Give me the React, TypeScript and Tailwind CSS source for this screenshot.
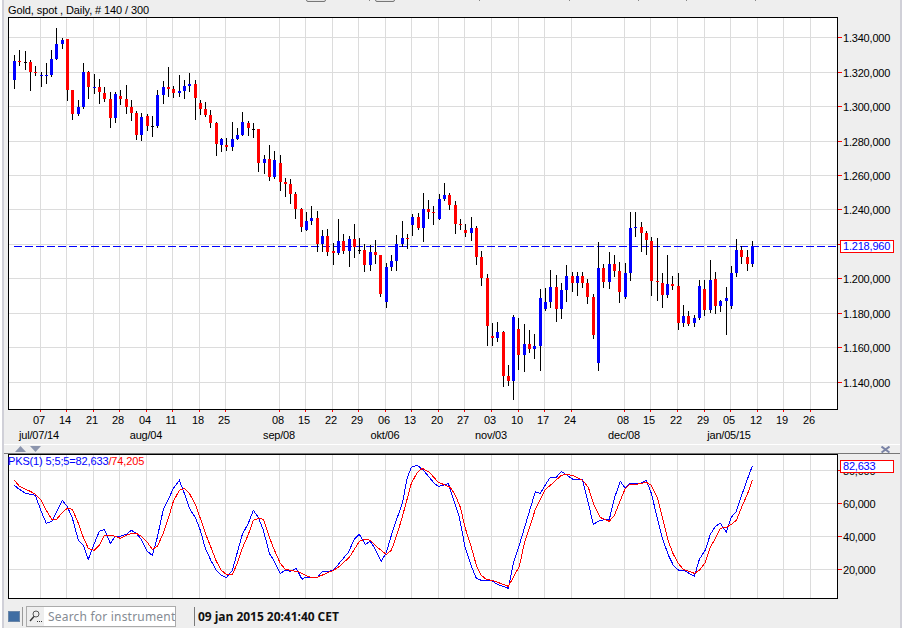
import React from 'react';

type Candle = [number, number, number, number, string];

// wick top, body top, body bottom, wick bottom in page pixels, b = up, r = down, k = doji
const CANDLES: Candle[] = [
  [55, 61, 80, 89, 'b'], [50, 61, 62, 66, 'r'], [51, 62, 63, 70, 'k'], [60, 62, 72, 91, 'r'], [66, 72, 73, 76, 'r'],
  [72, 75, 76, 87, 'b'], [63, 75, 76, 84, 'b'], [50, 59, 75, 77, 'b'], [28, 44, 59, 60, 'b'], [38, 40, 44, 49, 'b'],
  [39, 39, 90, 101, 'r'], [90, 90, 114, 120, 'r'], [100, 107, 114, 116, 'b'], [63, 72, 107, 109, 'b'], [71, 72, 87, 99, 'r'],
  [74, 87, 88, 94, 'b'], [79, 87, 92, 104, 'r'], [87, 93, 99, 102, 'r'], [92, 99, 118, 128, 'r'], [92, 94, 118, 123, 'b'],
  [90, 96, 99, 105, 'r'], [85, 99, 107, 114, 'r'], [100, 107, 113, 121, 'r'], [111, 113, 135, 140, 'r'], [113, 117, 135, 141, 'b'],
  [114, 116, 126, 131, 'r'], [116, 126, 127, 137, 'k'], [90, 95, 126, 128, 'b'], [81, 87, 95, 104, 'b'], [67, 87, 89, 97, 'r'],
  [86, 89, 93, 98, 'r'], [75, 91, 93, 97, 'b'], [80, 86, 91, 99, 'b'], [73, 84, 86, 92, 'b'], [80, 84, 98, 120, 'r'],
  [100, 103, 109, 115, 'r'], [102, 109, 115, 117, 'r'], [110, 115, 123, 128, 'r'], [122, 123, 144, 156, 'r'], [138, 139, 145, 152, 'b'],
  [138, 145, 147, 151, 'r'], [122, 139, 147, 151, 'b'], [128, 135, 139, 140, 'b'], [112, 122, 135, 136, 'b'], [121, 123, 128, 136, 'r'],
  [123, 129, 130, 138, 'k'], [129, 129, 163, 172, 'r'], [155, 159, 163, 174, 'b'], [145, 159, 177, 181, 'r'], [151, 160, 177, 179, 'b'],
  [155, 163, 182, 191, 'r'], [178, 182, 184, 197, 'r'], [179, 184, 194, 204, 'r'], [192, 194, 209, 219, 'r'], [208, 209, 227, 232, 'r'],
  [212, 221, 230, 231, 'b'], [206, 218, 221, 225, 'b'], [211, 218, 244, 252, 'r'], [230, 236, 244, 252, 'b'], [229, 236, 252, 256, 'r'],
  [243, 251, 253, 265, 'r'], [219, 241, 253, 255, 'b'], [234, 241, 251, 254, 'r'], [236, 239, 251, 267, 'b'], [224, 239, 247, 258, 'r'],
  [238, 250, 251, 254, 'k'], [244, 250, 265, 272, 'r'], [245, 252, 265, 271, 'b'], [240, 252, 255, 264, 'r'], [255, 255, 294, 297, 'r'],
  [263, 267, 302, 308, 'b'], [255, 261, 267, 271, 'b'], [235, 244, 261, 271, 'b'], [221, 238, 244, 247, 'b'], [234, 238, 239, 249, 'r'],
  [214, 217, 225, 236, 'b'], [213, 217, 228, 230, 'r'], [193, 209, 228, 242, 'b'], [200, 209, 212, 219, 'r'], [206, 212, 213, 225, 'r'],
  [194, 199, 219, 220, 'b'], [183, 195, 199, 201, 'b'], [193, 195, 205, 210, 'r'], [201, 205, 224, 234, 'r'], [219, 224, 225, 230, 'r'],
  [224, 230, 233, 237, 'r'], [217, 228, 233, 241, 'b'], [226, 228, 257, 265, 'r'], [251, 257, 278, 286, 'r'], [274, 278, 326, 346, 'r'],
  [323, 336, 338, 346, 'r'], [322, 332, 338, 342, 'b'], [331, 332, 376, 387, 'r'], [365, 376, 381, 386, 'r'], [315, 317, 381, 400, 'b'],
  [318, 329, 355, 370, 'r'], [324, 344, 355, 372, 'b'], [330, 344, 349, 353, 'r'], [334, 346, 349, 359, 'b'], [289, 298, 346, 371, 'b'],
  [288, 302, 309, 311, 'b'], [270, 287, 302, 308, 'b'], [275, 287, 309, 322, 'r'], [283, 290, 309, 319, 'b'], [265, 276, 290, 302, 'b'],
  [272, 276, 283, 292, 'r'], [272, 276, 283, 296, 'b'], [272, 276, 283, 288, 'r'], [279, 283, 297, 304, 'r'], [294, 297, 335, 339, 'r'],
  [242, 268, 363, 371, 'b'], [264, 268, 282, 288, 'r'], [252, 264, 282, 289, 'b'], [255, 264, 271, 277, 'r'], [262, 271, 292, 303, 'r'],
  [263, 273, 297, 299, 'b'], [212, 228, 273, 281, 'b'], [212, 227, 228, 237, 'b'], [222, 227, 233, 252, 'r'], [231, 233, 240, 255, 'r'],
  [237, 241, 281, 296, 'r'], [238, 281, 282, 301, 'r'], [273, 283, 295, 308, 'r'], [255, 284, 295, 298, 'b'], [276, 284, 286, 290, 'r'],
  [273, 286, 323, 330, 'r'], [305, 316, 323, 327, 'b'], [311, 316, 324, 326, 'r'], [315, 318, 323, 327, 'b'], [280, 286, 318, 320, 'b'],
  [280, 289, 310, 316, 'r'], [260, 280, 310, 313, 'b'], [272, 279, 306, 314, 'r'], [300, 301, 306, 312, 'b'], [287, 298, 301, 335, 'b'],
  [266, 273, 306, 309, 'b'], [239, 250, 273, 277, 'b'], [246, 250, 257, 264, 'r'], [250, 257, 264, 271, 'r'], [241, 246, 264, 267, 'b'],
];

const GRID_X = [
  40, 66, 93, 119, 146, 172, 199, 225, 279, 305, 332, 358, 385, 411, 438, 464, 491, 518, 544, 571, 624, 650, 677, 704, 730, 757, 783, 810,
];
const DAYS = [
  '07', '14', '21', '28', '04', '11', '18', '25', '08', '15', '22', '29', '06', '13', '20', '27', '03', '10', '17', '24', '08', '15', '22', '29', '05', '12', '19', '26',
];
const MONTHS: [string, number][] = [
  ['jul/07/14', 39], ['aug/04', 146], ['sep/08', 279], ['okt/06', 385], ['nov/03', 491], ['dec/08', 624], ['jan/05/15', 729],
];
const PRICES: [string, number][] = [
  ['1.340,000', 37], ['1.320,000', 72], ['1.300,000', 106], ['1.280,000', 141], ['1.260,000', 175], ['1.240,000', 209],
  ['1.220,000', 244], ['1.200,000', 278], ['1.180,000', 313], ['1.160,000', 347], ['1.140,000', 382],
];
const LEVELS: [string, number][] = [['80,000', 470], ['60,000', 503], ['40,000', 536], ['20,000', 569]];

// the oscillator was read off in three stretches, at 3x
const toPoints = (ox: number, oy: number, raw: number[]) => {
  const out: string[] = [];
  for (let i = 0; i < raw.length; i += 2) out.push(`${ox + raw[i] / 3},${oy + raw[i + 1] / 3}`);
  return out;
};

const BLUE_LINE = [
  ...toPoints(0, 400, [43,256,58,268,76,280,91,283,106,286,124,335,139,370,155,364,170,335,187,301,202,320,217,354,235,421,250,436,265,478,283,430,298,394,313,388,331,430,346,409,361,409,379,403,394,391,409,400,424,418,442,454,457,466,472,412,490,328,505,298,520,265,538,241,553,280,568,325,586,352,601,391,616,445,634,484,649,511,664,526,679,533,697,511,712,457,727,403,745,370,760,331,775,352,790,390,808,460,823,484,841,520,856,511,871,514,889,505]),
  ...toPoints(300, 440, [6,418,16,412,52,413,67,394,85,394,100,391,115,373,130,355,145,337,163,298,178,283,196,313,211,304,226,328,244,364,259,337,274,286,289,241,307,190,322,112,334,82,352,76,370,91,388,112,403,130,415,139,430,136,445,130,460,178,478,232,496,325,514,379,529,415,544,421,574,421,592,433,625,445,640,370,655,325,673,265,691,205,706,155,721,160,739,130,751,112,769,112,784,94,802,106,820,119,847,118,865,190,880,253,900,241]),
  ...toPoints(605, 440, [13,238,28,175,46,124,61,145,76,130,106,130,124,121,139,160,157,235,172,295,190,345,205,376,220,390,235,390,268,409,283,358,301,330,316,283,331,259,346,250,364,277,379,232,394,214,412,160,427,118,442,78]),
].join(' ');

const RED_LINE = [
  ...toPoints(0, 400, [43,240,58,259,76,268,91,274,106,283,124,301,139,331,155,358,170,358,187,337,202,325,217,328,235,370,250,412,265,445,283,451,298,436,313,406,331,406,346,409,361,415,379,406,394,400,409,400,424,409,442,427,457,448,472,439,490,400,505,355,520,304,538,271,553,265,568,280,586,313,601,355,616,400,634,445,649,484,664,511,679,523,697,523,712,490,727,445,745,403,760,361,775,355,790,358,808,412,823,450,841,490,856,508,871,511,889,514]),
  ...toPoints(300, 440, [0,397,16,406,34,412,52,412,85,397,100,391,115,382,148,352,178,304,196,298,211,301,232,322,259,343,274,331,289,289,304,241,322,175,334,130,352,97,367,85,388,97,415,127,430,133,451,142,466,166,481,202,496,265,514,322,529,376,544,406,559,418,577,421,625,439,658,379,673,310,691,256,706,208,736,148,751,136,784,106,799,103,817,106,847,120,865,142,882,196,900,232]),
  ...toPoints(605, 440, [13,244,28,226,46,181,61,145,76,132,100,132,124,127,139,136,157,172,172,232,190,304,205,343,220,370,235,388,268,400,283,391,301,367,316,322,331,295,346,265,364,262,379,253,394,241,412,196,427,163,442,121]),
].join(' ');

const candleColor = { b: '#0000ff', r: '#ff0000', k: '#000000' } as Record<string, string>;

function Grid({ rows, top, bottom }: { rows: number[]; top: number; bottom: number }) {
  return (
    <g fill="#dcdcdc">
      {GRID_X.map((x) => (
        <rect key={x} x={x} y={top} width={1} height={bottom - top} />
      ))}
      {rows.map((y) => (
        <rect key={y} x={9} y={y} width={828} height={1} />
      ))}
    </g>
  );
}

function YAxis({ ticks, top, height }: { ticks: [string, number][]; top: number; height: number }) {
  return (
    <svg
      width={62}
      height={height}
      viewBox={`838 ${top} 62 ${height}`}
      className="shrink-0 font-['Liberation_Sans',Arial,sans-serif] text-[11px] tracking-[-0.2px]"
    >
      {ticks.map(([label, y]) => (
        <g key={label}>
          <rect x={838} y={y} width={4} height={1} fill="#ff0000" />
          <text x={843} y={y + 4.5} fill="#000000">
            {label}
          </text>
        </g>
      ))}
    </svg>
  );
}

function PricePane() {
  return (
    <div className="flex h-[393px]">
      <div className="ml-[4px] h-[393px] w-[830px] shrink-0 border border-black bg-white">
        <svg width={828} height={391} viewBox="9 18 828 391" shapeRendering="crispEdges">
          <Grid rows={PRICES.map((p) => p[1])} top={18} bottom={409} />
          <line x1={14} y1={246} x2={837} y2={246} stroke="#0000ff" strokeDasharray="8 3" />
          {CANDLES.map(([high, open, close, low, kind], i) => {
            const x = Math.floor(14.5 + 5.31 * i);
            const color = candleColor[kind];
            return (
              <g key={i}>
                <rect x={x} y={high} width={1} height={low - high} fill="#000000" />
                <rect x={x - 1} y={open} width={3} height={Math.max(close - open, 1)} fill={color} />
              </g>
            );
          })}
        </svg>
      </div>
      <div className="relative">
        <YAxis ticks={PRICES} top={17} height={393} />
        <div className="absolute left-[2px] top-[223px] flex h-[13px] w-[54px] items-center border border-[#ff0000] bg-white pl-[2px] font-['Liberation_Sans',Arial,sans-serif] text-[11px] tracking-[-0.2px] text-[#0000ff]">
          1.218,960
        </div>
      </div>
    </div>
  );
}

function TimeAxis() {
  return (
    <svg
      width={896}
      height={34}
      viewBox="4 410 896 34"
      className="block font-['Liberation_Sans',Arial,sans-serif] text-[11px] tracking-[-0.2px]"
    >
      {GRID_X.map((x, i) => (
        <g key={x}>
          <rect x={x} y={410} width={1} height={2} fill="#ff0000" />
          <text x={x - 1} y={424} textAnchor="middle" fill="#000000">
            {DAYS[i]}
          </text>
        </g>
      ))}
      {MONTHS.map(([label, x]) => (
        <text key={label} x={x} y={439} textAnchor="middle" fill="#000000">
          {label}
        </text>
      ))}
    </svg>
  );
}

function PaneControls() {
  return (
    <div className="flex h-[8px] items-start justify-between pl-[11px] pr-[10px]">
      <svg width={26} height={7} viewBox="0 0 26 7" className="mt-[1px]">
        <polygon points="0,6 5.5,0 11,6" fill="#8c95ad" />
        <polygon points="15,0 26,0 20.5,6" fill="#8c95ad" />
      </svg>
      <svg width={9} height={7} viewBox="0 0 9 7" className="mt-[1px]">
        <path d="M0.5 0.5 L8.5 6.5 M8.5 0.5 L0.5 6.5" stroke="#7b84a6" strokeWidth={2} fill="none" />
      </svg>
    </div>
  );
}

function OscillatorPane() {
  return (
    <div className="flex h-[145px]">
      <div className="relative ml-[4px] h-[145px] w-[830px] shrink-0 border border-black bg-white">
        <svg width={828} height={143} viewBox="9 455 828 143" shapeRendering="crispEdges">
          <Grid rows={LEVELS.map((l) => l[1])} top={455} bottom={598} />
          <polyline points={BLUE_LINE} fill="none" stroke="#0000ff" />
          <polyline points={RED_LINE} fill="none" stroke="#ff0000" />
        </svg>
        <div className="absolute left-[-1px] top-0 font-['Liberation_Sans',Arial,sans-serif] text-[11px] leading-[13px] tracking-[-0.14px] text-[#0000ff]">
          PKS(1) 5;5;5=82,633<span className="text-[#ff0000]">/74,205</span>
        </div>
      </div>
      <div className="relative">
        <YAxis ticks={LEVELS} top={454} height={145} />
        <div className="absolute left-[2px] top-[6px] flex h-[13px] w-[54px] items-center border border-[#ff0000] bg-white pl-[2px] font-['Liberation_Sans',Arial,sans-serif] text-[11px] tracking-[-0.2px] text-[#0000ff]">
          82,633
        </div>
      </div>
    </div>
  );
}

function StatusBar() {
  return (
    <div className="mt-[6px] flex h-[23px] items-center pl-[4px]">
      <div className="h-[11px] w-[12px] border border-[#6a86a8] bg-[#3f6da3]" />
      <div className="ml-[2px] h-[19px] w-px bg-[#9a9a9a]" />
      <div className="ml-[3px] flex h-[21px] w-[150px] items-stretch border border-[#ababab]">
        <div className="flex w-[17px] items-center justify-center bg-[#eeeeee]">
          <svg width={14} height={13} viewBox="0 0 14 13" fill="none">
            <circle cx={7} cy={4} r={3} stroke="#555555" />
            <line x1={5} y1={6.5} x2={1} y2={11} stroke="#333333" strokeWidth={1.4} />
            <rect x={8} y={11} width={1} height={1} fill="#333333" />
            <rect x={10} y={11} width={1} height={1} fill="#333333" />
            <rect x={12} y={11} width={1} height={1} fill="#333333" />
          </svg>
        </div>
        <div className="flex flex-1 items-center overflow-hidden whitespace-nowrap bg-white pl-[4px] pt-[1px] font-['Noto_Sans',sans-serif] text-[12px] tracking-[0.2px] text-[#858b93]">
          Search for instrument
        </div>
      </div>
      <div className="ml-[18px] h-[19px] w-px bg-[#7a7a7a]" />
      <div className="ml-[3px] whitespace-nowrap pt-[1px] font-['Open_Sans',sans-serif] text-[12px] font-bold tracking-[-0.04px] text-[#111111]">
        09 jan 2015 20:41:40 CET
      </div>
    </div>
  );
}

export default function App() {
  return (
    <div className="flex h-[628px] w-[905px] overflow-hidden bg-white">
      <div className="ml-[2px] w-[2px] bg-[#d0d0d8]" />
      <div className="w-[896px] bg-[#eeeeee]">
        <div className="flex h-[2px] items-start overflow-hidden">
          <div className="ml-[302px] h-[4px] w-[20px] -translate-y-[2px] rounded-[2px] border border-[#777777] bg-[#e4e4e4]" />
          <div className="ml-[43px] h-[1px] w-px bg-[#888888]" />
          <div className="ml-[5px] h-[4px] w-[20px] -translate-y-[2px] rounded-[2px] border border-[#777777] bg-[#e4e4e4]" />
          <div className="ml-[84px] h-[1px] w-px bg-[#888888]" />
          <div className="ml-[89px] h-[1px] w-px bg-[#888888]" />
          <div className="ml-[68px] h-[1px] w-px bg-[#888888]" />
          <div className="ml-[47px] h-[1px] w-px bg-[#888888]" />
          <div className="ml-[68px] h-[1px] w-px bg-[#888888]" />
        </div>
        <div className="h-[15px] pl-[4px] font-['Liberation_Sans',Arial,sans-serif] text-[11px] leading-[16px] tracking-[-0.1px] text-black">
          Gold, spot , Daily, # 140 / 300
        </div>
        <PricePane />
        <TimeAxis />
        <div className="h-px bg-white" />
        <PaneControls />
        <div className="h-px bg-[#777777]" />
        <OscillatorPane />
        <StatusBar />
      </div>
      <div className="w-[2px] bg-[#d0d0d8]" />
    </div>
  );
}
